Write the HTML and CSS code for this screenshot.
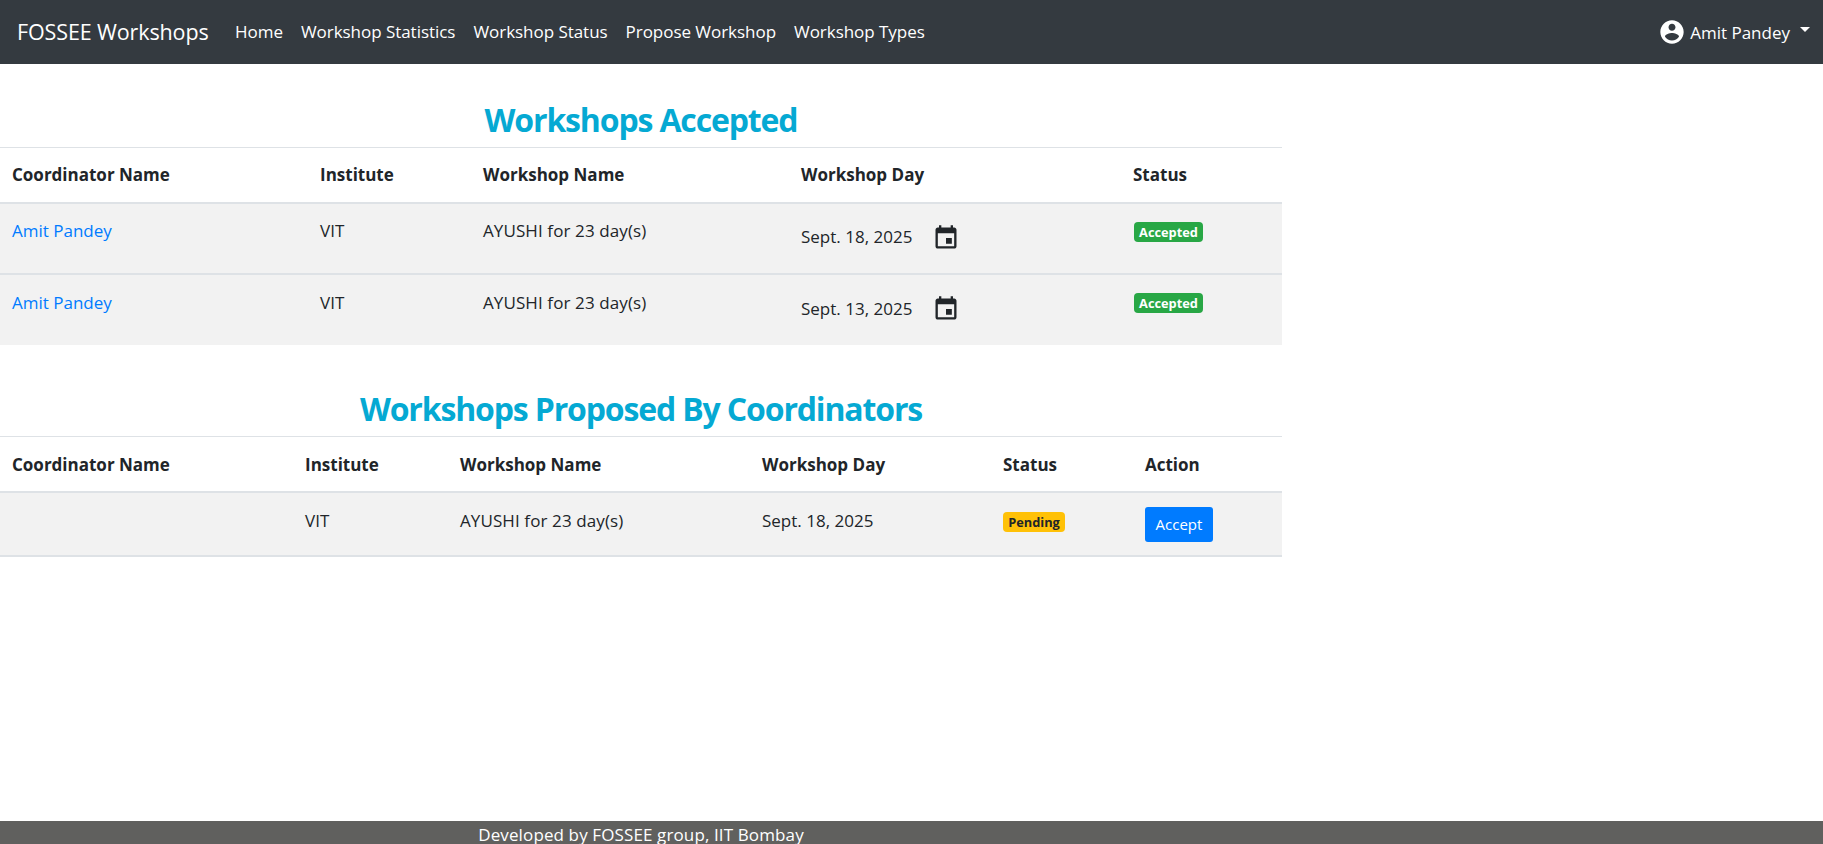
FILE: index.html
```html
<!DOCTYPE html>
<html lang="en">
<head>
<meta charset="utf-8">
<title>FOSSEE Workshops</title>
<link rel="stylesheet" href="styles.css">
</head>
<body>
<nav class="navbar">
  <a class="brand">FOSSEE Workshops</a>
  <div class="nav-links">
    <a>Home</a>
    <a>Workshop Statistics</a>
    <a>Workshop Status</a>
    <a>Propose Workshop</a>
    <a>Workshop Types</a>
  </div>
  <div class="user">
    <svg class="user-icon" viewBox="0 0 24 24"><path d="M12 2C6.48 2 2 6.48 2 12s4.48 10 10 10 10-4.48 10-10S17.52 2 12 2zm0 3c1.66 0 3 1.34 3 3s-1.34 3-3 3-3-1.34-3-3 1.34-3 3-3zm0 14.2c-2.5 0-4.71-1.28-6-3.22.03-1.99 4-3.08 6-3.08 1.99 0 5.97 1.09 6 3.08-1.29 1.94-3.5 3.22-6 3.22z"/></svg>
    <span class="user-name">Amit Pandey</span>
    <i class="caret"></i>
  </div>
</nav>
<main class="content">
  <h1 class="title">Workshops Accepted</h1>
  <table class="table accepted">
    <colgroup><col class="a1"><col class="a2"><col class="a3"><col class="a4"><col class="a5"></colgroup>
    <thead><tr><th>Coordinator Name</th><th>Institute</th><th>Workshop Name</th><th>Workshop Day</th><th>Status</th></tr></thead>
    <tbody>
      <tr>
        <td><a class="link">Amit Pandey</a></td><td>VIT</td><td class="workshop">AYUSHI for 23 day(s)</td>
        <td><div class="day"><span>Sept. 18, 2025</span><svg class="cal" viewBox="0 0 24 24"><path d="M17 12h-5v5h5v-5zM16 1v2H8V1H6v2H5c-1.11 0-1.99.9-1.99 2L3 19c0 1.1.89 2 2 2h14c1.1 0 2-.9 2-2V5c0-1.1-.9-2-2-2h-1V1h-2zm3 18H5V8h14v11z"/></svg></div></td>
        <td><b class="badge success">Accepted</b></td>
      </tr>
      <tr>
        <td><a class="link">Amit Pandey</a></td><td>VIT</td><td class="workshop">AYUSHI for 23 day(s)</td>
        <td><div class="day"><span>Sept. 13, 2025</span><svg class="cal" viewBox="0 0 24 24"><path d="M17 12h-5v5h5v-5zM16 1v2H8V1H6v2H5c-1.11 0-1.99.9-1.99 2L3 19c0 1.1.89 2 2 2h14c1.1 0 2-.9 2-2V5c0-1.1-.9-2-2-2h-1V1h-2zm3 18H5V8h14v11z"/></svg></div></td>
        <td><b class="badge success">Accepted</b></td>
      </tr>
    </tbody>
  </table>
  <h1 class="title second">Workshops Proposed By Coordinators</h1>
  <table class="table proposed">
    <colgroup><col class="p1"><col class="p2"><col class="p3"><col class="p4"><col class="p5"><col class="p6"></colgroup>
    <thead><tr><th>Coordinator Name</th><th>Institute</th><th>Workshop Name</th><th>Workshop Day</th><th>Status</th><th>Action</th></tr></thead>
    <tbody>
      <tr>
        <td></td><td>VIT</td><td class="workshop">AYUSHI for 23 day(s)</td><td>Sept. 18, 2025</td>
        <td><b class="badge warning">Pending</b></td>
        <td><button class="btn">Accept</button></td>
      </tr>
    </tbody>
  </table>
</main>
<footer class="footer"><p>Developed by FOSSEE group, IIT Bombay</p></footer>
</body>
</html>
```
FILE: styles.css
```css
* { box-sizing: border-box; }
body {
  margin: 0;
  height: 100vh;
  overflow: hidden;
  display: flex;
  flex-direction: column;
  background: #fff;
  color: #212529;
  font-family: "Open Sans", "Noto Sans", sans-serif;
  font-size: 17px;
  line-height: 26px;
}
.navbar {
  height: 64px;
  flex: none;
  display: flex;
  align-items: center;
  padding: 0 13px 0 17px;
  background: #343a40;
  color: #fff;
}
.brand { width: 218px; font-size: 21.5px; letter-spacing: -0.12px; }
.nav-links { display: flex; gap: 18px; letter-spacing: -0.04px; }
.user { margin-left: auto; display: flex; align-items: center; }
.user-icon { width: 28px; height: 28px; margin-right: 4px; fill: #fff; }
.user-name { padding-top: 1px; }
.caret {
  margin: -6px 0 0 10px;
  border: 5px solid transparent;
  border-top-color: #fff;
  border-bottom: 0;
}
.content { width: 1282px; flex: 1; }
.title {
  margin: 34px 0 7px;
  height: 42px;
  line-height: 44px;
  font-size: 32px;
  font-weight: 700;
  letter-spacing: -1.15px;
  text-align: center;
  color: #05a9d3;
}
.title.second { margin-top: 42px; }
.table {
  width: 100%;
  table-layout: fixed;
  border-collapse: separate;
  border-spacing: 0;
}
th, td { padding: 14px 0 0 13px; text-align: left; vertical-align: top; }
th { height: 57px; border-top: 1px solid #dee2e6; border-bottom: 2px solid #dee2e6; font-weight: 700; }
td { background: #f2f2f2; }
.accepted td { height: 70px; }
.accepted tr:first-child td { height: 71px; border-bottom: 2px solid #dee2e6; }
.accepted tr:last-child td { padding-top: 15px; }
.accepted tr:last-child .badge { margin-top: 3px; line-height: 21px; }
.accepted tr:last-child .cal { margin-top: 0; }
.accepted thead tr th { height: 57px; padding-top: 14px; }
.proposed th, .proposed td { padding-top: 15px; }
.proposed td { height: 64px; border-bottom: 2px solid #dee2e6; }
.proposed .badge { margin-top: 4px; line-height: 21px; }
.a1 { width: 307px; } .a2 { width: 163px; } .a3 { width: 318px; } .a4 { width: 332px; }
.p1 { width: 292px; } .p2 { width: 155px; } .p3 { width: 302px; } .p4 { width: 241px; } .p5 { width: 142px; }
.accepted th:first-child, .proposed th:first-child, td:first-child { padding-left: 12px; }
.workshop { letter-spacing: 0.1px; }
.link { color: #007bff; }
.day { display: flex; align-items: center; height: 40px; margin-top: -1px; }
.cal { width: 28px; height: 28px; margin: 2px 0 0 20px; fill: #212529; }
.badge {
  display: block;
  width: 69px;
  height: 20px;
  margin: 4px 0 0 1px;
  border-radius: 4px;
  line-height: 20px;
  font-size: 12.8px;
  text-align: center;
}
.success { background: #28a745; color: #fff; }
.warning { width: 62px; margin-left: 0; background: #ffc107; }
.btn {
  display: block;
  width: 68px;
  height: 35px;
  margin-top: -1px;
  padding: 0 0 2px;
  border: 0;
  border-radius: 3px;
  background: #007bff;
  color: #fff;
  font-family: inherit;
  font-size: 15px;
}
.footer { height: 23px; flex: none; background: #60605e; color: #fff; }
.footer p { width: 1282px; margin: 0; line-height: 27px; letter-spacing: 0.12px; text-align: center; }
```
